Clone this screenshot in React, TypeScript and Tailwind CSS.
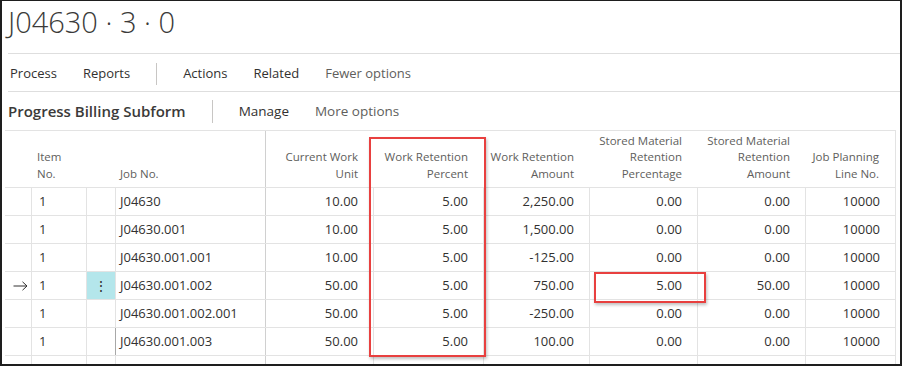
import React from 'react'

type Row = {
	item: string;
	job: string;
	values: string[];
	selected?: boolean;
	focus?: boolean;
}

const rows: Row[] = [
	{ item: "1", job: "J04630", values: ["10.00", "5.00", "2,250.00", "0.00", "0.00", "10000"] },
	{ item: "1", job: "J04630.001", values: ["10.00", "5.00", "1,500.00", "0.00", "0.00", "10000"] },
	{ item: "1", job: "J04630.001.001", values: ["10.00", "5.00", "-125.00", "0.00", "0.00", "10000"] },
	{ item: "1", job: "J04630.001.002", values: ["50.00", "5.00", "750.00", "5.00", "50.00", "10000"], selected: true },
	{ item: "1", job: "J04630.001.002.001", values: ["50.00", "5.00", "-250.00", "0.00", "0.00", "10000"] },
	{ item: "1", job: "J04630.001.003", values: ["50.00", "5.00", "100.00", "0.00", "0.00", "10000"], focus: true },
];

const headers: string[][] = [
	["Current Work", "Unit"],
	["Work Retention", "Percent"],
	["Work Retention", "Amount"],
	["Stored Material", "Retention", "Percentage"],
	["Stored Material", "Retention", "Amount"],
	["Job Planning", "Line No."],
];

const grid = "grid grid-cols-[27px_55px_29px_150px_108px_110px_106px_108px_108px_90px]";

const Arrow = () => (
	<svg width="15" height="10" viewBox="0 0 15 10" fill="none" stroke="#323130" strokeWidth="1">
		<path d="M0.5 5H14" />
		<path d="M9.5 0.8L14 5L9.5 9.2" />
	</svg>
)

const App = () => {
	return (
		<div className="w-[902px] h-[366px] overflow-hidden bg-white border-l-2 border-t border-r-2 border-b-2 border-[#1e1e1e] relative font-['Open_Sans',sans-serif]">
			{/* title */}
			<div className="ml-[6px] h-[53px] border-b border-[#dedede] pt-[3px]">
				<h1 className="text-[29px] leading-[36px] font-light text-[#3b3a39]">J04630 · 3 · 0</h1>
			</div>

			{/* action bar */}
			<div className="ml-[6px] h-[38px] border-b border-[#dedede] flex items-center gap-[26px] pl-[2px] pt-[2px] text-[13px] text-[#323130]">
				<span>Process</span>
				<span>Reports</span>
				<div className="w-px h-[22px] bg-[#c8c6c4]"></div>
				<span>Actions</span>
				<span>Related</span>
				<span className="text-[#605e5c]">Fewer options</span>
			</div>

			{/* subform bar */}
			<div className="ml-[6px] h-[38px] flex items-center gap-[26px] text-[13.5px] text-[#323130]">
				<span className="text-[15px] font-semibold text-[#3b3a39]">Progress Billing Subform</span>
				<div className="w-px h-[23px] bg-[#c8c6c4]"></div>
				<span>Manage</span>
				<span className="text-[#605e5c]">More options</span>
			</div>

			{/* table */}
			<div className="ml-[3px] w-[891px]">
				<div className={`${grid} h-[58px] border-t border-b border-[#e3e3e3] text-[11.5px] leading-[16.5px] text-[#605e5c]`}>
					<div></div>
					<div className="flex items-end pl-[5px] pb-[5px]">
						<span>Item<br />No.</span>
					</div>
					<div></div>
					<div className="flex items-end pl-[4px] pb-[5px] border-r border-[#d0d0d0]">
						<span>Job No.</span>
					</div>
					{headers.map((h, i) => (
						<div key={i} className={`flex items-end justify-end text-right pr-[16px] pb-[5px] ${i === 5 ? "border-r border-[#e3e3e3]" : ""}`}>
							<span>
								{h.map((line, j) => (
									<React.Fragment key={j}>
										{line}
										{j < h.length - 1 && <br />}
									</React.Fragment>
								))}
							</span>
						</div>
					))}
				</div>

				{rows.map((row, i) => (
					<div key={i} className={`${grid} h-[28px] border-b border-[#e3e3e3] text-[13px] text-[#323130]`}>
						<div className="border-r border-[#e3e3e3] flex items-center pl-[8px]">
							{row.selected && <Arrow />}
						</div>
						<div className="border-r border-[#e3e3e3] flex items-center pl-[7px]">{row.item}</div>
						<div className={`border-r border-[#e3e3e3] flex items-center justify-center ${row.selected ? "bg-[#b4e6eb]" : ""}`}>
							{row.selected && <span className="text-[14px] text-[#323130]">⋮</span>}
						</div>
						<div className={`border-r border-[#d0d0d0] flex items-center pl-[4px] ${row.focus ? "border-l border-l-[#a8a8a8] -ml-px" : ""}`}>{row.job}</div>
						{row.values.map((v, j) => (
							<div key={j} className="border-r border-[#e3e3e3] flex items-center justify-end pr-[15px]">{v}</div>
						))}
					</div>
				))}

				<div className={`${grid} h-[28px]`}>
					{[0, 1, 2, 3, 4, 5, 6, 7, 8, 9].map((c) => (
						<div key={c} className={`border-r ${c === 3 ? "border-[#d0d0d0]" : "border-[#e3e3e3]"}`}></div>
					))}
				</div>
			</div>

			{/* annotation boxes */}
			<div className="absolute left-[367px] top-[136px] w-[117px] h-[220px] border-2 border-[#e8403f] shadow-[1px_2px_3px_rgba(0,0,0,0.25)]"></div>
			<div className="absolute left-[592px] top-[271px] w-[112px] h-[31px] border-2 border-[#e8403f] shadow-[1px_2px_3px_rgba(0,0,0,0.25)]"></div>
		</div>
	)
}

export default App
